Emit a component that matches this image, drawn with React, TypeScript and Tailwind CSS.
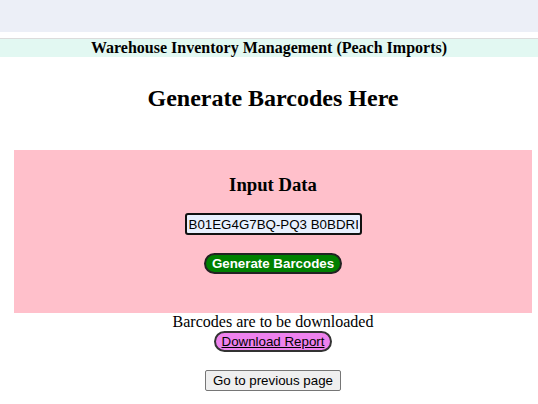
export default function App() {
  return (
    <div className="min-h-[404px] bg-white font-['Liberation_Serif',serif] text-black">
      <div className="h-8 bg-[#eceff7]"></div>
      <div className="mt-[6px] h-[19px] border-t border-[#dcdcdc] bg-[#e2f8f2] text-center text-base font-bold leading-[18px]">
        Warehouse Inventory Management (Peach Imports)
      </div>
      <div className="pl-2">
        <h1 className="mt-[28px] text-center text-2xl font-bold leading-[27px]">
          Generate Barcodes Here
        </h1>
        <div className="mx-[6px] mt-[38px] flex h-[163px] flex-col items-center bg-[#ffc0cb]">
          <h3 className="mt-[24px] text-[18.7px] font-bold leading-[22px]">Input Data</h3>
          <input
            className="mt-[17px] h-[22px] w-[177px] rounded-[3px] border-2 border-[#111] bg-[#e8f0fe] px-[2px] font-['Liberation_Sans',sans-serif] text-[13.33px] text-black outline-none"
            defaultValue="B01EG4G7BQ-PQ3 B0BDRI"
            type="text"
          />
          <button className="mt-[18px] h-[21px] w-[138px] rounded-full border-2 border-[#222] bg-[#008000] font-['Liberation_Sans',sans-serif] text-[13.33px] font-bold leading-none text-white">
            Generate Barcodes
          </button>
        </div>
        <div className="flex flex-col items-center">
          <p className="text-base leading-[18px]">Barcodes are to be downloaded</p>
          <button className="h-[21px] w-[118px] rounded-full border-2 border-[#333] bg-[#ee82ee] font-['Liberation_Sans',sans-serif] text-[13.33px] leading-none text-black underline">
            Download Report
          </button>
          <button className="mt-[18px] h-[21px] w-[136px] rounded-[2px] border border-[#767676] bg-[#efefef] font-['Liberation_Sans',sans-serif] text-[13.33px] leading-none text-black">
            Go to previous page
          </button>
        </div>
      </div>
    </div>
  );
}
